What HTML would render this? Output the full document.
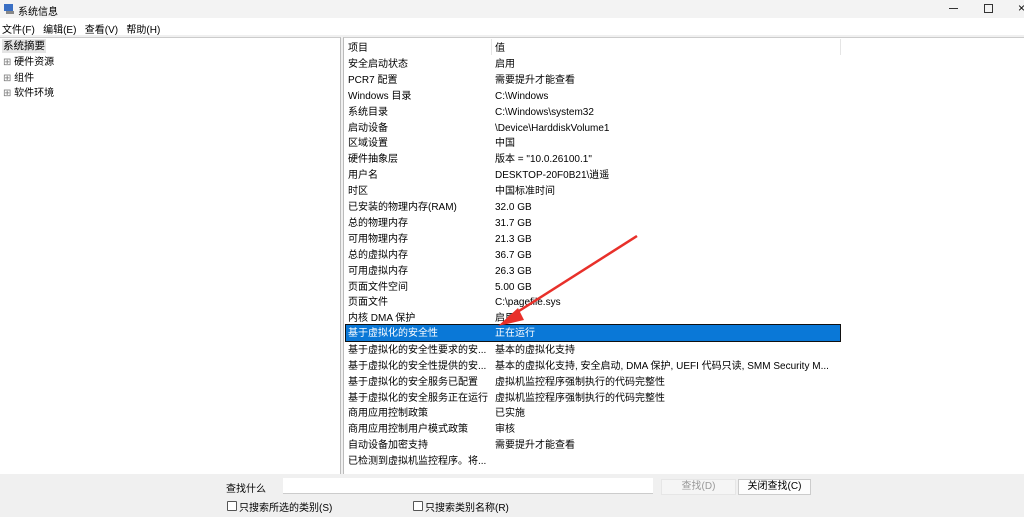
<!DOCTYPE html><html><head><meta charset="utf-8"><style>
body{margin:0;width:1024px;height:517px;overflow:hidden;background:#f0f0f0;font-family:"Liberation Sans","Noto Sans CJK SC",sans-serif;font-size:10px;color:#000;position:relative}
.a{position:absolute;white-space:nowrap}
.row{position:absolute;left:344px;width:497px;height:16px;line-height:16px}
.row span{position:absolute;left:4px;top:1px}.row b{font-weight:normal;position:absolute;left:151px;top:1px}
</style></head><body>
<div class="a" style="left:0;top:0;width:1024px;height:18px;background:#f3f3f3"></div>
<svg class="a" style="left:3px;top:3px" width="12" height="12"><rect x="1" y="1" width="9" height="7" fill="#3a6fc4"/><rect x="3" y="8" width="8" height="3" fill="#888"/></svg>
<div class="a" style="left:18px;top:3px;font-size:10px">系统信息</div>
<div class="a" style="left:949px;top:8px;width:9px;height:1px;background:#333"></div>
<div class="a" style="left:984px;top:4px;width:7px;height:7px;border:1px solid #333"></div>
<div class="a" style="left:1018px;top:1px;font-size:12px">×</div>
<div class="a" style="left:0;top:18px;width:1024px;height:17px;background:#fff"></div>
<div class="a" style="left:2px;top:21px;font-size:10px">文件(F)&nbsp;&nbsp;&nbsp;编辑(E)&nbsp;&nbsp;&nbsp;查看(V)&nbsp;&nbsp;&nbsp;帮助(H)</div>
<div class="a" style="left:0;top:37px;width:340px;height:436px;background:#fff;border-top:1px solid #ccc;border-right:1px solid #bbb"></div>
<div class="a" style="left:2px;top:39px;background:#e5e5e5;padding:0 1px;line-height:14px;font-size:10.5px">系统摘要</div>
<div class="a" style="left:3px;top:55px;line-height:15.5px;font-size:10px;color:#000"><span style="color:#777">⊞</span> 硬件资源<br><span style="color:#777">⊞</span> 组件<br><span style="color:#777">⊞</span> 软件环境</div>
<div class="a" style="left:343px;top:37px;width:681px;height:436px;background:#fff;border-top:1px solid #ccc;border-left:1px solid #bbb"></div>
<div class="a" style="left:491px;top:39px;width:1px;height:16px;background:#e5e5e5"></div>
<div class="a" style="left:840px;top:39px;width:1px;height:16px;background:#e5e5e5"></div>
<div class="row" style="top:40px"><span>项目</span><b>值</b></div>
<div class="row" style="top:56px"><span>安全启动状态</span><b>启用</b></div>
<div class="row" style="top:72px"><span>PCR7 配置</span><b>需要提升才能查看</b></div>
<div class="row" style="top:88px"><span>Windows 目录</span><b>C:\Windows</b></div>
<div class="row" style="top:104px"><span>系统目录</span><b>C:\Windows\system32</b></div>
<div class="row" style="top:120px"><span>启动设备</span><b>\Device\HarddiskVolume1</b></div>
<div class="row" style="top:135px"><span>区域设置</span><b>中国</b></div>
<div class="row" style="top:151px"><span>硬件抽象层</span><b>版本 = "10.0.26100.1"</b></div>
<div class="row" style="top:167px"><span>用户名</span><b>DESKTOP-20F0B21\逍遥</b></div>
<div class="row" style="top:183px"><span>时区</span><b>中国标准时间</b></div>
<div class="row" style="top:199px"><span>已安装的物理内存(RAM)</span><b>32.0 GB</b></div>
<div class="row" style="top:215px"><span>总的物理内存</span><b>31.7 GB</b></div>
<div class="row" style="top:231px"><span>可用物理内存</span><b>21.3 GB</b></div>
<div class="row" style="top:247px"><span>总的虚拟内存</span><b>36.7 GB</b></div>
<div class="row" style="top:263px"><span>可用虚拟内存</span><b>26.3 GB</b></div>
<div class="row" style="top:279px"><span>页面文件空间</span><b>5.00 GB</b></div>
<div class="row" style="top:294px"><span>页面文件</span><b>C:\pagefile.sys</b></div>
<div class="row" style="top:310px"><span>内核 DMA 保护</span><b>启用</b></div>
<div class="row" style="top:325px;height:16px;background:#0a78d7;color:#fff;outline:1px solid #111;left:346px;width:494px"><span style="left:2px">基于虚拟化的安全性</span><b style="left:149px">正在运行</b></div>
<div class="row" style="top:342px"><span>基于虚拟化的安全性要求的安...</span><b>基本的虚拟化支持</b></div>
<div class="row" style="top:358px"><span>基于虚拟化的安全性提供的安...</span><b>基本的虚拟化支持, 安全启动, DMA 保护, UEFI 代码只读, SMM Security M...</b></div>
<div class="row" style="top:374px"><span>基于虚拟化的安全服务已配置</span><b>虚拟机监控程序强制执行的代码完整性</b></div>
<div class="row" style="top:390px"><span>基于虚拟化的安全服务正在运行</span><b>虚拟机监控程序强制执行的代码完整性</b></div>
<div class="row" style="top:405px"><span>商用应用控制政策</span><b>已实施</b></div>
<div class="row" style="top:421px"><span>商用应用控制用户模式政策</span><b>审核</b></div>
<div class="row" style="top:437px"><span>自动设备加密支持</span><b>需要提升才能查看</b></div>
<div class="row" style="top:453px"><span>已检测到虚拟机监控程序。将...</span></div>
<svg class="a" style="left:490px;top:230px" width="160" height="105"><line x1="147" y1="6" x2="18" y2="88" stroke="#e8302a" stroke-width="2.5"/><polygon points="8,96 28,78 34,90" fill="#e8302a"/></svg>
<div class="a" style="left:226px;top:480px">查找什么</div>
<div class="a" style="left:283px;top:478px;width:370px;height:15px;background:#fff;border-bottom:1px solid #ccc"></div>
<div class="a" style="left:661px;top:479px;width:73px;height:14px;background:#f5f5f5;border:1px solid #e6e6e6;color:#999;text-align:center;line-height:14px">查找(D)</div>
<div class="a" style="left:738px;top:479px;width:71px;height:14px;background:#fdfdfd;border:1px solid #ccc;text-align:center;line-height:14px">关闭查找(C)</div>
<div class="a" style="left:227px;top:501px;width:8px;height:8px;border:1px solid #555;border-radius:1px;background:#fff"></div>
<div class="a" style="left:239px;top:499px">只搜索所选的类别(S)</div>
<div class="a" style="left:413px;top:501px;width:8px;height:8px;border:1px solid #555;border-radius:1px;background:#fff"></div>
<div class="a" style="left:425px;top:499px">只搜索类别名称(R)</div>
</body></html>
